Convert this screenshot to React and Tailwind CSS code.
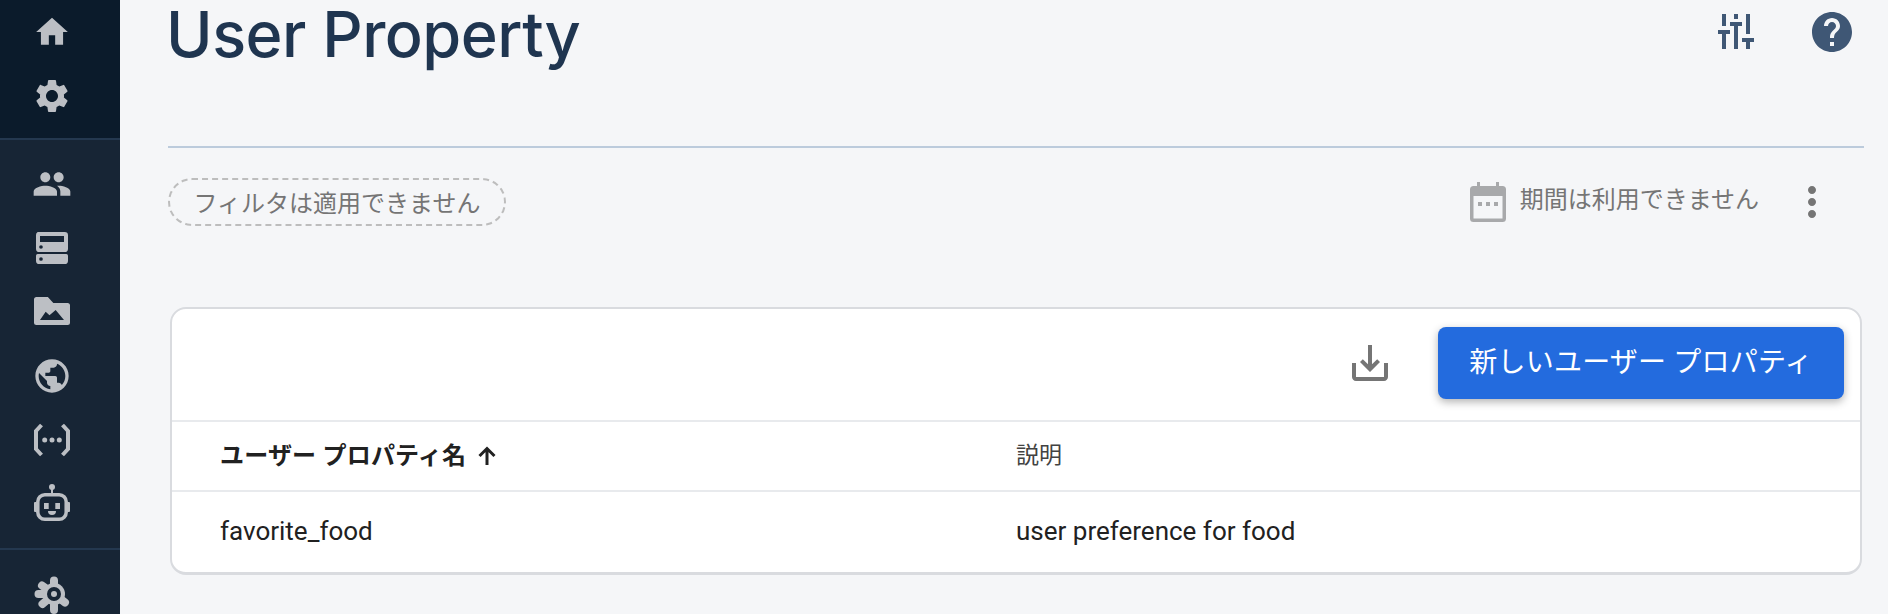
import React from "react";
import { MdHome, MdSettings, MdPeople, MdPublic, MdHelp, MdMoreVert, MdSaveAlt } from "react-icons/md";

const Dns = () => (
  <svg viewBox="0 0 24 24" width="40" height="40" fill="currentColor">
    <path fillRule="evenodd" d="M3.400 2.400h16.200a2 2 0 0 1 2 2v8a2 2 0 0 1-2 2H4.400a2 2 0 0 1-2-2v-8a2 2 0 0 1 1-2zM4.800 4.800v3.600h14.400V4.800zM5.400 10.300a1.100 1.100 0 1 0 0 2.200 1.100 1.100 0 0 0 0-2.200z" />
    <path fillRule="evenodd" d="M3.400 15.600h17.200a1 1 0 0 1 1 1v3a2 2 0 0 1-2 2H4.400a2 2 0 0 1-2-2v-3a1 1 0 0 1 1-1zM5.400 17.500a1.100 1.100 0 1 0 0 2.200 1.100 1.100 0 0 0 0-2.200z" />
  </svg>
);

const PhotoFolder = () => (
  <svg viewBox="0 0 24 24" width="40" height="40" fill="currentColor">
    <path fillRule="evenodd" d="M9.500 3H2.700A1.500 1.500 0 0 0 1.200 4.500v13.800a1.500 1.500 0 0 0 1.500 1.500h18.600a1.500 1.500 0 0 0 1.500-1.500V8.100a1.500 1.500 0 0 0-1.500-1.500H12.800L9.500 3zM4.800 16.800L8.200 11.800l2.300 2.200 3.700-3.200 5 6z" />
  </svg>
);

const Functions = () => (
  <svg viewBox="0 0 40 40" width="40" height="40" fill="none" stroke="currentColor">
    <path d="M9.500 5L4 11V29L9.500 35M30.500 5L36 11V29L30.500 35" strokeWidth="4" />
    <g fill="currentColor" stroke="none">
      <circle cx="12.700" cy="20" r="2.500" />
      <circle cx="20" cy="20" r="2.500" />
      <circle cx="27.300" cy="20" r="2.500" />
    </g>
  </svg>
);

const Robot = () => (
  <svg viewBox="0 0 40 40" width="40" height="40" fill="none" stroke="currentColor">
    <path d="M20 3v8" strokeWidth="2" />
    <rect x="5.800" y="10.800" width="28.400" height="24.400" rx="7" strokeWidth="3.500" />
    <g fill="currentColor" stroke="none">
      <circle cx="20" cy="3" r="3" />
      <rect x="2" y="18" width="3" height="10" rx="1" />
      <rect x="35" y="18" width="3" height="10" rx="1" />
      <rect x="12" y="19" width="4.700" height="6" />
      <rect x="23.300" y="19" width="4.700" height="6" />
      <path d="M16 27h8a4 4 0 0 1-8 0z" />
    </g>
  </svg>
);

const Extensions = () => (
  <svg viewBox="0 0 40 40" width="40" height="40" fill="none" stroke="currentColor" strokeLinecap="round">
    <path d="M22 20L22 6.500M22 20L10 11.500M22 20L6.500 20M22 20L10.500 30M22 20L22 36M22 20L33 28.500" strokeWidth="8" />
    <circle cx="22" cy="20" r="11" fill="currentColor" stroke="none" />
    <circle cx="22" cy="20" r="7" fill="#172535" stroke="none" />
    <circle cx="22" cy="20" r="3" fill="currentColor" stroke="none" />
  </svg>
);

const Calendar = () => (
  <svg viewBox="0 0 36 40" width="36" height="40" fill="currentColor">
    <path fillRule="evenodd" d="M7 0h3v4h16V0h3v4h3.500A3.500 3.500 0 0 1 36 7.500V36.500A3.500 3.500 0 0 1 32.500 40H3.500A3.500 3.500 0 0 1 0 36.500V7.500A3.500 3.500 0 0 1 3.500 4H7zM3.500 14v22.500h29V14z" />
    <rect x="8" y="20" width="4" height="4" />
    <rect x="16" y="20" width="4" height="4" />
    <rect x="24" y="20" width="4" height="4" />
  </svg>
);

const Sliders = () => (
  <svg viewBox="0 0 36 36" width="36" height="36" fill="currentColor">
    <path d="M4 0h4v12H4zM0 16h12v4H8v15H4V20H0zM16 0h4v5h-4zM12 8h12v4h-4v23h-4V12h-4zM28 0h4v20h-4zM24 24h12v4h-4v7h-4v-7h-4z" />
  </svg>
);

const SortArrow = () => (
  <svg viewBox="0 0 20 20" width="20" height="20" fill="none" stroke="currentColor" strokeWidth="3">
    <path d="M10 19V3M2.500 10L10 2.500L17.500 10" />
  </svg>
);

const SideIcon = ({ children }) => (
  <div className="h-16 w-[104px] flex items-center justify-center text-[#bcbfc4]">{children}</div>
);

export default function App() {
  return (
    <div className="flex h-[614px] overflow-hidden bg-[#f5f6f8] font-['Roboto','Noto_Sans_CJK_JP',sans-serif]">
      <aside className="w-[120px] shrink-0 h-full overflow-hidden bg-[#172535] flex flex-col">
        <div className="h-[140px] shrink-0 bg-[#0b1b2b] border-b-2 border-[#24384f]">
          <SideIcon><MdHome size={38} /></SideIcon>
          <SideIcon><MdSettings size={40} /></SideIcon>
        </div>
        <div className="pt-3 pb-3 border-b-2 border-[#24384f]">
          <SideIcon><MdPeople size={40} /></SideIcon>
          <SideIcon><Dns /></SideIcon>
          <SideIcon><PhotoFolder /></SideIcon>
          <SideIcon><MdPublic size={40} /></SideIcon>
          <SideIcon><Functions /></SideIcon>
          <SideIcon><Robot /></SideIcon>
        </div>
        <div className="pt-3">
          <SideIcon><Extensions /></SideIcon>
        </div>
      </aside>

      <main className="flex-1 min-w-0 pl-12 pr-6">
        <div className="h-[148px] border-b-2 border-[#bccbdc] flex items-start justify-between">
          <h1 className="-ml-[2px] text-[63px] leading-[69px] font-medium font-['Inter',sans-serif] text-[#1f3550] tracking-[-0.5px]">User Property</h1>
          <div className="flex items-center text-[#3f5775] mt-2 mr-2">
            <span className="mr-[54px]"><Sliders /></span>
            <MdHelp size={48} />
          </div>
        </div>

        <div className="h-[159px] flex items-start justify-between pt-[30px]">
          <div className="h-[48px] w-[338px] rounded-full border-2 border-dashed border-[#bdbdbd] pt-[3px] flex items-center justify-center text-[24px] text-[#757575] whitespace-nowrap">
            フィルタは適用できません
          </div>
          <div className="flex items-center text-[#757575] text-[24px] whitespace-nowrap">
            <span className="text-[#a8a9ab] -mt-[1px] ml-[1px]"><Calendar /></span>
            <span className="ml-[14px] -mt-[4px]">期間は利用できません</span>
            <MdMoreVert size={48} className="ml-[29px] mr-[28px]" />
          </div>
        </div>

        <div className="mx-[2px] h-[268px] rounded-[16px] border-2 border-b-[3px] border-[#d9dbdf] bg-white overflow-hidden">
          <div className="h-[113px] border-b-2 border-[#e8eaed] flex items-center justify-end pr-[16px] pb-[4px]">
            <MdSaveAlt size={48} className="text-[#757575] mr-[44px]" />
            <button className="h-[72px] w-[406px] rounded-[8px] bg-[#236bde] text-white text-[28px] tracking-[0.2px] shadow-[0_3px_8px_rgba(0,0,0,0.3)] whitespace-nowrap">
              新しいユーザー プロパティ
            </button>
          </div>
          <div className="h-[70px] border-b-2 border-[#e8eaed] grid grid-cols-[796px_1fr] items-center pl-[48px] text-[24px] text-[#212121]">
            <div className="font-bold flex items-center whitespace-nowrap tracking-[0.2px]">
              ユーザー プロパティ名
              <span className="ml-[11px]"><SortArrow /></span>
            </div>
            <div className="text-[23px] text-[#424242]">説明</div>
          </div>
          <div className="h-[79px] grid grid-cols-[796px_1fr] items-center pl-[48px] text-[26px] text-[#212121]">
            <div>favorite_food</div>
            <div>user preference for food</div>
          </div>
        </div>
      </main>
    </div>
  );
}
